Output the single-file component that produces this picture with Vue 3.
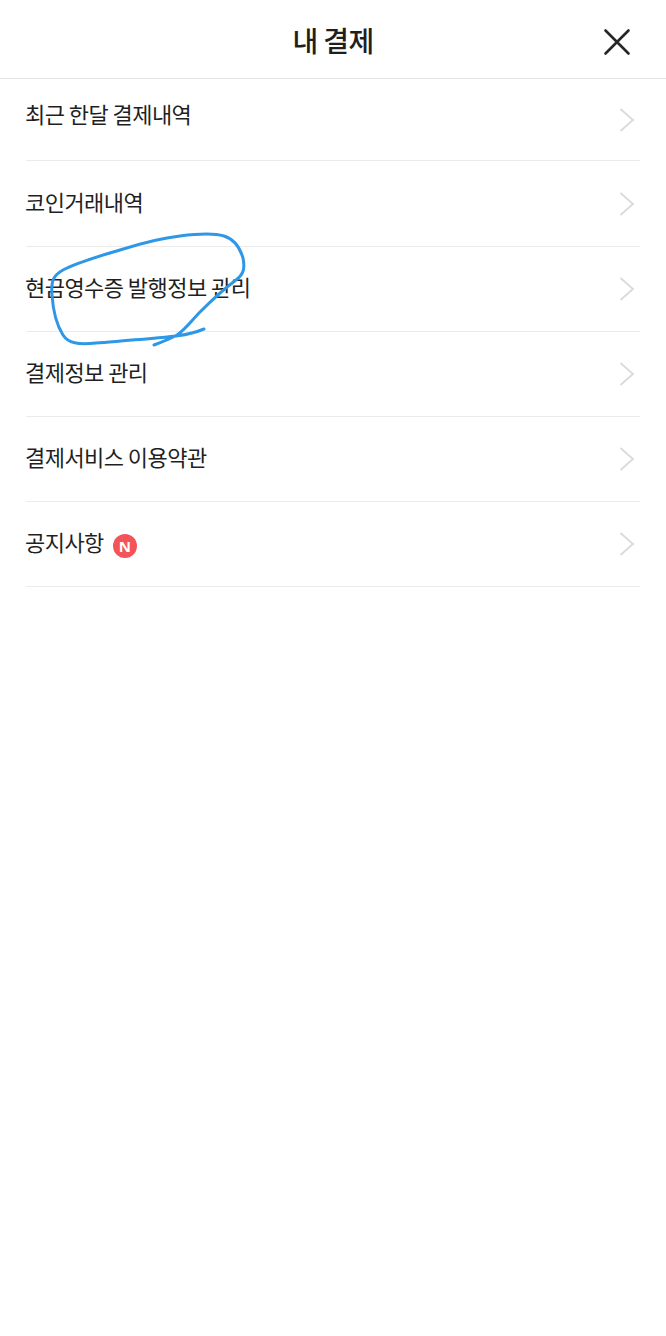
<template>
  <div class="page">
    <header class="top">
      <h1 class="title">내 결제</h1>
      <button class="close" type="button" aria-label="닫기">
        <svg width="28" height="28" viewBox="0 0 28 28">
          <path d="M2.5 2.5 25.5 25.5M25.5 2.5 2.5 25.5" fill="none" stroke="#262626" stroke-width="2.6" stroke-linecap="round" />
        </svg>
      </button>
    </header>

    <ul class="menu">
      <li v-for="item in items" :key="item.label" class="row" :class="{ first: item.first }">
        <span class="label">{{ item.label }}</span>
        <span v-if="item.isNew" class="badge">N</span>
        <svg class="chev" width="18" height="26" viewBox="0 0 18 26">
          <path d="M2.5 2 15 13 2.5 24" fill="none" stroke="#dadada" stroke-width="1.8" />
        </svg>
      </li>
    </ul>

    <!-- pen mark on top of the screenshot -->
    <svg class="scribble" width="666" height="400" viewBox="0 0 666 400">
      <path
        d="M204 329C192 334 183 335 176 336C150 339 120 341 96 343C78 345 68 343 63 335C56 324 53 310 52 295C51 283 52 276 63 270C78 262 100 256 120 250C142 243 162 238 180 236C196 234 214 233 224 236C234 239 240 248 243 258C245 268 244 274 236 280C224 289 212 300 200 312C192 320 186 329 177 335C170 339 162 342 154 345"
        fill="none"
        stroke="#2e98e6"
        stroke-width="3"
        stroke-linecap="round"
        stroke-linejoin="round"
      />
    </svg>
  </div>
</template>

<script setup>
const items = [
  { label: "최근 한달 결제내역", first: true },
  { label: "코인거래내역" },
  { label: "현금영수증 발행정보 관리" },
  { label: "결제정보 관리" },
  { label: "결제서비스 이용약관" },
  { label: "공지사항", isNew: true },
];
</script>

<style>
body {
  background: #fff;
}
</style>

<style scoped>
.page {
  position: relative;
  height: 1336px;
  background: #fff;
  font-family: "Noto Sans CJK KR", "Noto Sans", sans-serif;
  color: #1f1f1f;
  overflow: hidden;
}

.top {
  position: relative;
  display: flex;
  align-items: center;
  justify-content: center;
  box-sizing: border-box;
  height: 79px;
  padding-top: 2px;
  border-bottom: 1px solid #e2e2e2;
}

.title {
  margin: 0;
  font-size: 28px;
  font-weight: 500;
  letter-spacing: -0.6px;
  color: #1f1f1f;
}

.close {
  position: absolute;
  right: 35px;
  top: 28px;
  width: 28px;
  height: 28px;
  padding: 0;
  border: 0;
  background: none;
  display: block;
}

.close svg {
  display: block;
}

.menu {
  list-style: none;
  margin: 0 26px;
  padding: 0;
}

.row {
  display: flex;
  align-items: center;
  height: 84px;
  border-bottom: 1px solid #ebebeb;
}

.row:nth-child(2) {
  height: 85px;
}

.row.first {
  height: 81px;
  align-items: flex-start;
}

.label {
  font-size: 22px;
  letter-spacing: -0.55px;
  line-height: 32px;
  margin-bottom: 6px;
  margin-left: -1px;
  color: #1f1f1f;
}

.first .label {
  margin-top: 18px;
  margin-bottom: 0;
}

.badge {
  display: flex;
  align-items: center;
  justify-content: center;
  width: 24px;
  height: 24px;
  margin-left: 9px;
  margin-top: 4px;
  border-radius: 50%;
  background: #f5535a;
  color: #fff;
  font-size: 15px;
  font-weight: 700;
  font-family: "Noto Sans", sans-serif;
  line-height: 1;
}

.chev {
  margin-left: auto;
  margin-right: 4px;
}

.first .chev {
  margin-top: 28px;
}

.scribble {
  position: absolute;
  left: 0;
  top: 0;
  pointer-events: none;
}
</style>
